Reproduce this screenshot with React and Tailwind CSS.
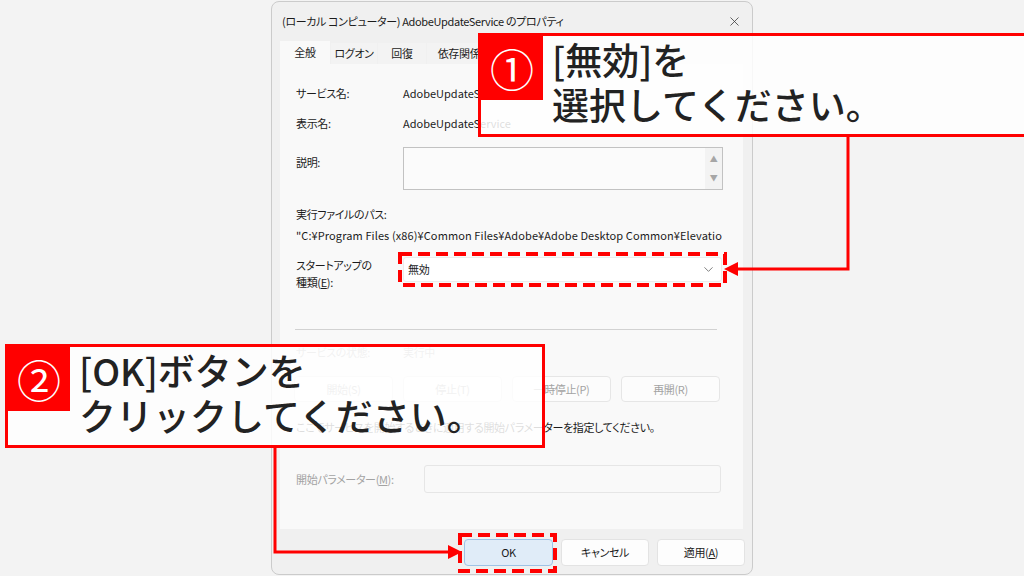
import React from 'react';
import { X, ChevronDown } from 'lucide-react';

// 無効化されたボタン（サービス状態の操作）
const GhostButton = ({ label }) => (
  <div className="w-[99px] h-[26px] rounded-[4px] border border-[#e6e6e6] bg-[#fcfcfc] flex items-center justify-center text-[#a3a3a3]">
    {label}
  </div>
);

const Row = ({ label, children, className = '' }) => (
  <div className={`flex h-[16px] leading-[16px] ${className}`}>
    <div className="w-[107px] shrink-0">{label}</div>
    <div className="tracking-normal">{children}</div>
  </div>
);

const Callout = ({ num, lines, className }) => (
  <div className={`absolute border-[3px] border-[#ff0000] bg-white/85 flex ${className}`}>
    <div className="w-[62px] h-[64px] bg-[#ff0000] flex items-center justify-center text-white text-[44px] leading-none font-normal">
      {num}
    </div>
    <div className="ml-[9px] pt-[1px] text-[37px] leading-[45px] font-medium text-[#222] whitespace-nowrap">
      {lines.map(l => <div key={l}>{l}</div>)}
    </div>
  </div>
);

const App = () => {
  return (
    <div className="w-[1024px] h-[576px] relative overflow-hidden bg-[#f3f3f3] font-['Noto_Sans_CJK_JP',sans-serif] text-[#1b1b1b]">

      {/* プロパティ ダイアログ */}
      <div className="pl-[271px] pt-[1px] text-[11px] tracking-[-0.35px] [font-feature-settings:'palt']">
        <div className="w-[482px] h-[574px] rounded-[8px] border border-[#cbcbcb] bg-[#f0f0f0] flex flex-col">

          {/* タイトルバー */}
          <div className="h-[39px] flex items-center pl-[10px] pr-[10px]">
            <span>(ローカル コンピューター) AdobeUpdateService のプロパティ</span>
            <X size={15} strokeWidth={1.2} className="ml-auto text-[#333]" />
          </div>

          {/* タブ */}
          <div className="h-[23px] ml-[8px] flex items-end gap-[1px]">
            <div className="w-[50px] h-[23px] bg-[#f9f9f9] flex items-center justify-center">全般</div>
            <div className="w-[46px] h-[21px] bg-[#f3f3f3] flex items-center justify-center">ログオン</div>
            <div className="w-[48px] h-[21px] bg-[#f3f3f3] flex items-center justify-center">回復</div>
            <div className="w-[64px] h-[21px] bg-[#f3f3f3] flex items-center justify-center">依存関係</div>
          </div>

          {/* 全般タブの中身 */}
          <div className="ml-[8px] w-[463px] h-[465px] bg-[#f9f9f9] pl-[16px] pt-[21px]">
            <Row label="サービス名:">AdobeUpdateService</Row>
            <Row label="表示名:" className="mt-[14px]">AdobeUpdateService</Row>

            <div className="flex mt-[16px]">
              <div className="w-[107px] shrink-0 pt-[7px] leading-[16px]">説明:</div>
              <div className="w-[320px] h-[43px] border border-[#c2c2c2] bg-[#fbfbfb] flex justify-end">
                <div className="w-[17px] bg-[#f3f3f3] flex flex-col items-center justify-between py-[7px] text-[8px] leading-none text-[#a6a6a6]">
                  <span>▲</span>
                  <span>▼</span>
                </div>
              </div>
            </div>

            <div className="mt-[16px] h-[16px] leading-[16px]">実行ファイルのパス:</div>
            <div className="mt-[5px] h-[16px] leading-[16px] w-[426px] overflow-hidden whitespace-nowrap tracking-[0.1px]">
              "C:¥Program Files (x86)¥Common Files¥Adobe¥Adobe Desktop Common¥ElevationManager¥AdobeUpdateService.exe"
            </div>

            <div className="flex mt-[14px] h-[34px]">
              <div className="w-[107px] shrink-0 leading-[17px]">
                <div>スタートアップの</div>
                <div>種類(<span className="underline">E</span>):</div>
              </div>
              <div className="w-[319px] h-[25px] bg-white border border-[#ececec] rounded-[3px] flex items-center pl-[4px] pr-[5px]">
                <span>無効</span>
                <ChevronDown size={15} strokeWidth={1.2} className="ml-auto text-[#555]" />
              </div>
            </div>

            <div className="mt-[38px] ml-[-1px] w-[422px] h-[1px] bg-[#d2d2d2]" />

            <div className="flex mt-[14px] h-[16px] leading-[16px] text-[#a3a3a3]">
              <div className="w-[107px] shrink-0">サービスの状態:</div>
              <div>実行中</div>
            </div>

            <div className="flex gap-[10px] mt-[16px] ml-[-2px]">
              <GhostButton label="開始(S)" />
              <GhostButton label="停止(T)" />
              <GhostButton label="一時停止(P)" />
              <GhostButton label="再開(R)" />
            </div>

            <div className="mt-[17px] h-[16px] leading-[16px]">
              ここでサービスを開始するときに適用する開始パラメーターを指定してください。
            </div>

            <div className="flex items-center mt-[30px] h-[28px]">
              <div className="w-[128px] shrink-0 text-[#a3a3a3]">
                開始パラメーター(<span className="underline">M</span>):
              </div>
              <div className="w-[297px] h-[28px] border border-[#e6e6e6] bg-[#f9f9f9] rounded-[3px]" />
            </div>
          </div>

          {/* OK / キャンセル / 適用 */}
          <div className="flex justify-end gap-[8px] pt-[10px] pr-[7px]">
            <div className="w-[89px] h-[27px] rounded-[4px] border border-[#9ec3e6] bg-[#e0ecf8] flex items-center justify-center">OK</div>
            <div className="w-[88px] h-[27px] rounded-[4px] border border-[#e3e3e3] bg-[#fdfdfd] flex items-center justify-center">キャンセル</div>
            <div className="w-[88px] h-[27px] rounded-[4px] border border-[#e3e3e3] bg-[#fdfdfd] flex items-center justify-center">適用(<span className="underline">A</span>)</div>
          </div>
        </div>
      </div>

      {/* 注釈の吹き出し */}
      <Callout num="①" lines={['[無効]を', '選択してください。']} className="left-[478px] top-[33px] w-[560px] h-[104px]" />
      <Callout num="②" lines={['[OK]ボタンを', 'クリックしてください。']} className="left-[5px] top-[344px] w-[540px] h-[104px]" />

      {/* 矢印と破線枠 */}
      <svg className="absolute inset-0 pointer-events-none" width="1024" height="576" viewBox="0 0 1024 576">
        <path d="M848 136 V269 H736" fill="none" stroke="#ff0000" strokeWidth="3" />
        <polygon points="724,269 738,262 738,276" fill="#ff0000" />
        <path d="M275 447 V552 H450" fill="none" stroke="#ff0000" strokeWidth="3" />
        <polygon points="462,552 448,545 448,559" fill="#ff0000" />
        <rect x="400" y="254" width="325" height="31" fill="none" stroke="#ff0000" strokeWidth="4" strokeDasharray="12 6" />
        <rect x="460" y="535" width="95" height="36" fill="none" stroke="#ff0000" strokeWidth="4" strokeDasharray="12 6" />
      </svg>
    </div>
  );
};

export default App;
